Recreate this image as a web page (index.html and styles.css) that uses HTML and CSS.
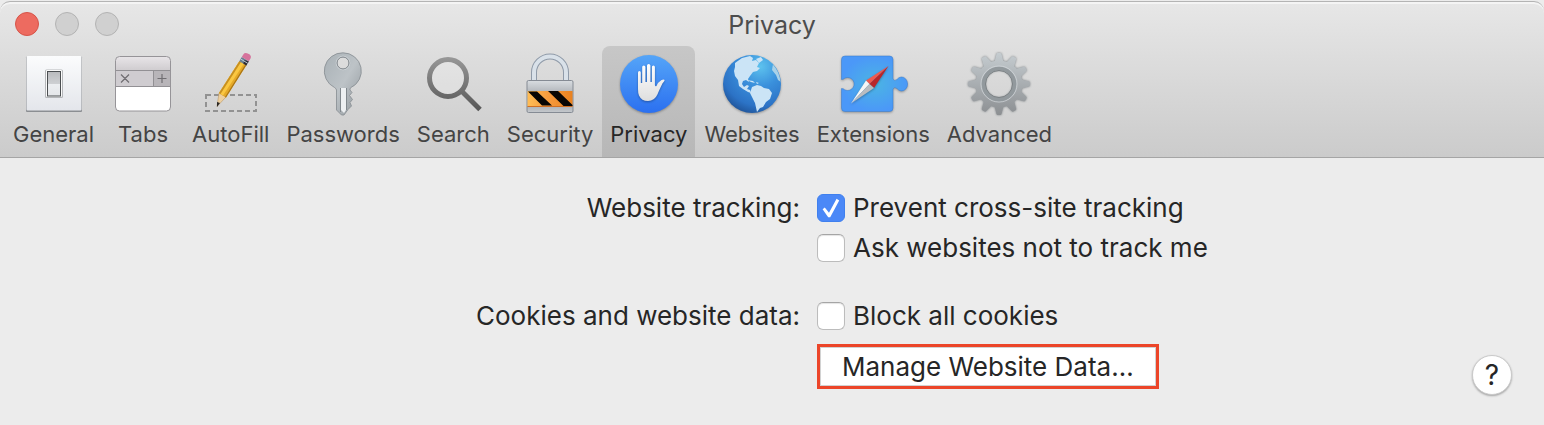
FILE: index.html
```html
<!DOCTYPE html>
<html lang="en">
<head>
    <meta charset="UTF-8">
    <title>Privacy</title>
    <link rel="stylesheet" href="styles.css">
</head>
<body>
<div class="window">
    <header class="header">
        <div class="titlebar">
            <div class="lights">
                <button class="light close" aria-label="Close"></button>
                <button class="light" aria-label="Minimize"></button>
                <button class="light" aria-label="Zoom"></button>
            </div>
            <h1 class="title">Privacy</h1>
        </div>

        <nav class="toolbar">
            <button class="tab">
                <svg class="icon" viewBox="0 0 64 64">
                    <defs>
                        <linearGradient id="plate" x2="0" y2="1"><stop stop-color="#fbfcfd"/><stop offset="1" stop-color="#e4e6eb"/></linearGradient>
                        <linearGradient id="rocker" x2="0" y2="1"><stop stop-color="#b9babd"/><stop offset=".5" stop-color="#ced0d3"/><stop offset=".52" stop-color="#eceef1"/><stop offset="1" stop-color="#e4e6e9"/></linearGradient>
                    </defs>
                    <rect x="4" y="4.500" width="56" height="55.500" rx="1" fill="#8b8e92"/>
                    <rect x="4.500" y="4" width="55" height="54.500" rx="1" fill="url(#plate)"/>
                    <rect x="23" y="17.500" width="18" height="28.500" rx="1.500" fill="#b5b7ba"/>
                    <rect x="24" y="18" width="16" height="27" rx="1" fill="#fafafa"/>
                    <rect x="25.500" y="19.500" width="13" height="24.500" fill="url(#rocker)" stroke="#4b4e51"/>
                </svg>
                <span>General</span>
            </button>

            <button class="tab">
                <svg class="icon" viewBox="0 0 64 64">
                    <defs>
                        <linearGradient id="bar" x2="0" y2="1"><stop stop-color="#e8e5e8"/><stop offset="1" stop-color="#cfcccf"/></linearGradient>
                    </defs>
                    <rect x="4.500" y="4.500" width="55" height="54.500" rx="4" fill="#fff"/>
                    <path d="M4.500 18.500v-10a4 4 0 0 1 4-4h47a4 4 0 0 1 4 4v10z" fill="url(#bar)"/>
                    <path d="M4.500 18.500h38v16h-38z" fill="#cfccd0"/>
                    <path d="M42.500 18.500h17v16h-17z" fill="#b8b5b9"/>
                    <path d="M4.500 18.500h55M4.500 34.500h55M42.500 18.500v16" stroke="#929094" fill="none"/>
                    <rect x="4.500" y="4.500" width="55" height="54.500" rx="4" fill="none" stroke="#969498"/>
                    <path d="M10 22.500l8 8m0-8l-8 8M46.500 26.500h9M51 22v9" stroke="#706e72" stroke-width="1.200" fill="none"/>
                </svg>
                <span>Tabs</span>
            </button>

            <button class="tab">
                <svg class="icon" viewBox="0 0 64 64">
                    <rect x="7" y="43" width="50" height="16" fill="none" stroke="#929292" stroke-width="2" stroke-dasharray="5 3"/>
                    <path d="M20 41l7 4-9 9.500z" fill="#edcf9f" stroke="#b08c58" stroke-width=".5"/>
                    <path d="M18 50l3 1-3 4z" fill="#292725"/>
                    <path d="M20 41L40.500 9l7 4L27 45.500z" fill="#e5a928"/>
                    <path d="M20 41L40.500 9l4.500 2.500L24 43.500z" fill="#fac741"/>
                    <path d="M20 41L40.500 9l1.500 1L21.500 42z" fill="#c68f22"/>
                    <path d="M27 45.500L47.500 13l-1.200-.6L26 45z" fill="#a97517"/>
                    <path d="M40.300 9.200l2.500-4.200 7 4.300-2.500 4.200z" fill="#6a7f91"/>
                    <path d="M45.500 8l4.300 1.500-2.500 4-3-2z" fill="#302b31"/>
                    <path d="M41.700 7l7 4.300" stroke="#b8ccd9" stroke-width="1"/>
                    <path d="M42.800 5l1.500-2.500Q45.500.5 48 1.200 51 2 51.800 4q.4 1.200-.4 2.700l-1.600 2.600z" fill="#d6739c"/>
                </svg>
                <span>AutoFill</span>
            </button>

            <button class="tab">
                <svg class="icon" viewBox="0 0 64 64">
                    <defs>
                        <linearGradient id="key" x2="1" y2="1"><stop stop-color="#a9b1b6"/><stop offset=".5" stop-color="#bdc3c7"/><stop offset="1" stop-color="#8e959a"/></linearGradient>
                    </defs>
                    <path fill-rule="evenodd" d="M32 .8a18.300 18.300 0 0 1 7.500 35l-.5 1.200v1l2 2.500-2.500 3 3 4-2.500 3 1.500 3.500-3.500 3.500-4 5.500h-2.500L25.500 58V38q-.3-1.500-2-2.500A18.300 18.300 0 0 1 32 .8zm0 4.200a6 6 0 1 0 0 12 6 6 0 0 0 0-12z" fill="url(#key)" stroke="#858c90" stroke-width=".8"/>
                    <path d="M30 36h5v22l-2 3-3-3z" fill="#edf0f2"/>
                    <path d="M29.500 36v24M35.500 36v22" stroke="#81888d" fill="none"/>
                    <circle cx="32" cy="11" r="6.800" fill="none" stroke="#d7dcdf" stroke-width=".8"/>
                    <circle cx="32" cy="11" r="6" fill="none" stroke="#858c90" stroke-width=".8"/>
                </svg>
                <span>Passwords</span>
            </button>

            <button class="tab">
                <svg class="icon" viewBox="0 0 64 64">
                    <defs>
                        <linearGradient id="lens" gradientUnits="userSpaceOnUse" x1="0" y1="5" x2="0" y2="60"><stop stop-color="#989898"/><stop offset="1" stop-color="#555"/></linearGradient>
                    </defs>
                    <circle cx="27" cy="26" r="18.500" fill="#fff" fill-opacity=".2" stroke="url(#lens)" stroke-width="5"/>
                    <path d="M40 38.500l19 19" stroke="url(#lens)" stroke-width="5"/>
                </svg>
                <span>Search</span>
            </button>

            <button class="tab">
                <svg class="icon" viewBox="0 0 64 64">
                    <defs>
                        <linearGradient id="steel" x2="0" y2="1"><stop stop-color="#d9dde1"/><stop offset=".35" stop-color="#b4b8bd"/><stop offset=".75" stop-color="#a9adb2"/><stop offset="1" stop-color="#c5c9cd"/></linearGradient>
                        <linearGradient id="amber"><stop stop-color="#ffbd56"/><stop offset=".5" stop-color="#f6993b"/><stop offset="1" stop-color="#e98220"/></linearGradient>
                    </defs>
                    <path d="M16 29V20.500a16 16 0 0 1 32 0V29" fill="none" stroke="#8f9aa8" stroke-width="6"/>
                    <path d="M16 29V20.500a16 16 0 0 1 32 0V29" fill="none" stroke="#d9e1e9" stroke-width="4"/>
                    <rect x="9" y="28.500" width="46" height="32" rx="1.500" fill="url(#steel)" stroke="#858b94"/>
                    <path d="M9.500 39h45v15h-45z" fill="url(#amber)"/>
                    <path d="M10 39.500h9l15 14H24zM30 39h10l14.500 14v1h-9z" fill="#080604"/>
                    <path d="M9.500 54.500h45" stroke="#d06f23"/>
                </svg>
                <span>Security</span>
            </button>

            <button class="tab active" aria-current="page">
                <svg class="icon" viewBox="0 0 64 64">
                    <defs>
                        <linearGradient id="blue" x2="0" y2="1"><stop stop-color="#55a5f8"/><stop offset="1" stop-color="#2b70f0"/></linearGradient>
                        <linearGradient id="palm" x2="0" y2="1"><stop stop-color="#fff"/><stop offset="1" stop-color="#dedede"/></linearGradient>
                    </defs>
                    <circle cx="32" cy="32" r="29" fill="url(#blue)" class="shade"/>
                    <path class="shade" fill="url(#palm)" d="M21 37V20.500q0-1.500 1.400-1.500t1.400 1.500V31h1.400V15q0-1.500 1.600-1.500t1.600 1.500v15H30V13.500q0-1.500 1.700-1.500t1.700 1.500V30h1.500V15q0-1.500 1.500-1.500t1.500 1.500v18q.2 2 1.600 1 1.600-4 5-6 2.300-1 3.200 0-.6 1.600-2.300 3.500-3.400 7-5 11Q37.500 49 31 49q-6.500 0-9-5.500-1-2.500-1-6.500z"/>
                </svg>
                <span>Privacy</span>
            </button>

            <button class="tab">
                <svg class="icon" viewBox="0 0 64 64">
                    <defs>
                        <radialGradient id="sea" cx=".65" cy=".2" r=".85"><stop stop-color="#5dc2ee"/><stop offset=".4" stop-color="#3a90dc"/><stop offset=".8" stop-color="#2c73c6"/><stop offset="1" stop-color="#1f5499"/></radialGradient>
                        <clipPath id="globe"><circle cx="32" cy="32" r="28.500"/></clipPath>
                    </defs>
                    <circle cx="32" cy="32" r="29" fill="url(#sea)" class="shade"/>
                    <g clip-path="url(#globe)" fill="#cbe4f6">
                        <path d="M15 11l7-5 8-2 3 2-1 3 4-1 3 3-2 4 3 1-3 3-4 1-3 4-2 3 1 3-3-2-3 1-1 3 2 3 3-2 2 1-2 3 3 1 1 3-3-1-5-3-4-3-1-6-3-4-1-5 1-4z"/>
                        <path d="M36 7l5-2 2 3-4 3zM27 28l6 1 2 2-4-1zM36 30l3 1-2 1zM32 35l5-2 4 1 3 2 5 1 3 4-2 6-4 3-3 5-3 1-3 4-2-9-3-6-2-4z"/>
                        <path d="M53 12l5 6 3 7v5l-3-2-2-5-4-5z" fill="#a9d2e8"/>
                        <path d="M47 5l5 4 2 4-5-4z" fill="#8bcbec"/>
                    </g>
                </svg>
                <span>Websites</span>
            </button>

            <button class="tab">
                <svg class="icon" viewBox="0 0 64 64">
                    <defs>
                        <radialGradient id="puzzle"><stop stop-color="#4bb5e3"/><stop offset="1" stop-color="#4b98f8"/></radialGradient>
                    </defs>
                    <path class="shade" fill="url(#puzzle)" stroke="#3478cb" stroke-width=".5" d="M4 4h44.500q3.500 0 3.500 3.500V27q1.500 2.500 4 .500A6 7 0 1 1 56 36.500q-2.500-2-4 .500v19q0 3.500-3.500 3.500H4Q.5 59.500.5 56V36.500q2 0 3 1.200A6.500 6.500 0 1 0 3.500 26.300q-1 1.200-3 1.200v-20Q.5 4 4 4z"/>
                    <g class="shade">
                        <path d="M47.500 14L25 28.500l3.500 3.500z" fill="#ef5a50"/>
                        <path d="M47.500 14L33 36l-4.500-4z" fill="#b9262a"/>
                        <path d="M10 51.500L25 28.500l3.500 3.500z" fill="#f6f6f6"/>
                        <path d="M10 51.500L33 36l-4.500-4z" fill="#b9bcc0"/>
                    </g>
                </svg>
                <span>Extensions</span>
            </button>

            <button class="tab">
                <svg class="icon" viewBox="0 0 64 64">
                    <defs>
                        <linearGradient id="metal" x2="0" y2="1"><stop stop-color="#c6cdd1"/><stop offset="1" stop-color="#8b8e91"/></linearGradient>
                        <path id="teeth" d="M27.500 10l2-8q.2-1 1.200-1h2.600q1 0 1.200 1l2 8zM27.500 54l2 8q.2 1 1.200 1h2.600q1 0 1.200-1l2-8z"/>
                        <mask id="gear">
                            <g fill="#fff">
                                <circle cx="32" cy="32" r="23.500"/>
                                <use href="#teeth"/>
                                <use href="#teeth" transform="rotate(30 32 32)"/>
                                <use href="#teeth" transform="rotate(60 32 32)"/>
                                <use href="#teeth" transform="rotate(90 32 32)"/>
                                <use href="#teeth" transform="rotate(120 32 32)"/>
                                <use href="#teeth" transform="rotate(150 32 32)"/>
                            </g>
                            <circle cx="32" cy="32" r="13.500" fill="#000"/>
                        </mask>
                    </defs>
                    <g class="edge"><rect width="64" height="64" fill="url(#metal)" mask="url(#gear)"/></g>
                    <circle cx="32" cy="32" r="18" fill="none" stroke="#d2d7da" stroke-width=".8"/>
                    <circle cx="32" cy="32" r="15.500" fill="none" stroke="#92999d" stroke-width="3.500"/>
                    <circle cx="32" cy="32" r="13.500" fill="none" stroke="#7b8184"/>
                </svg>
                <span>Advanced</span>
            </button>
        </nav>
    </header>

    <main class="pane">
        <div class="name" id="tracking">Website tracking:</div>
        <div class="options" role="group" aria-labelledby="tracking">
            <label class="check"><input type="checkbox" checked><span>Prevent cross-site tracking</span></label>
            <label class="check"><input type="checkbox"><span>Ask websites not to track me</span></label>
        </div>

        <div class="name" id="cookies">Cookies and website data:</div>
        <div class="options" role="group" aria-labelledby="cookies">
            <label class="check"><input type="checkbox"><span>Block all cookies</span></label>
            <div class="actions">
                <button class="manage">Manage Website Data…</button>
                <button class="help" aria-label="Help">?</button>
            </div>
        </div>
    </main>
</div>
</body>
</html>
```
FILE: styles.css
```css
* {
    box-sizing: border-box;
}

body {
    margin: 0;
    background: #ececec;
    color: #262626;
    font-family: Inter, "Liberation Sans", sans-serif;
    font-size: 26px;
}

button {
    margin: 0;
    padding: 0;
    border: none;
    background: none;
    color: inherit;
    font: inherit;
}

.window {
    min-height: 100vh;
    padding-top: 1px;
}

/* title bar and toolbar */
.header {
    border: 1px solid #b4b4b4;
    border-width: 1px 0;
    border-bottom-color: #a5a5a5;
    border-radius: 10px 10px 0 0;
    background: linear-gradient(#e7e7e7, #cbcbcb);
    box-shadow: inset 0 2px 0 #f4f4f4;
}

.titlebar {
    display: grid;
    grid-template-columns: 1fr auto 1fr;
    height: 44px;
    padding: 10px 15px 0;
}

.lights {
    display: flex;
    gap: 16px;
}

.light {
    width: 24px;
    height: 24px;
    border: 1px solid #b3b3b3;
    border-radius: 50%;
    background: #d0d0d0;
}

.light.close {
    border-color: #d65449;
    background: #ed6b60;
}

.title {
    margin: 0;
    color: #4d4d4d;
    font-size: 25px;
    font-weight: 400;
    line-height: 26px;
}

.toolbar {
    display: flex;
    gap: 1px;
    padding: 0 5px;
}

.tab {
    display: flex;
    flex-direction: column;
    align-items: center;
    gap: 4px;
    height: 111px;
    padding: 6px 8px 0;
    border-radius: 8px 8px 0 0;
    color: #444;
    font-size: 22px;
    line-height: 28px;
}

.tab.active {
    background: linear-gradient(#c7c7c7, #b7b7b7);
    color: #262626;
}

.icon {
    display: block;
    width: 64px;
    height: 64px;
    overflow: visible;
}

.shade {
    filter: drop-shadow(0 1px 1px rgba(0, 0, 0, 0.3));
}

.edge {
    filter: drop-shadow(0 0 1px #7b8185);
}

/* settings */
.pane {
    display: grid;
    grid-template-columns: 1fr 1fr;
    gap: 28px 17px;
    padding: 30px 32px 30px 105px;
    line-height: 40px;
}

.name {
    text-align: right;
}

.check {
    display: flex;
    align-items: center;
    gap: 8px;
    width: fit-content;
}

.check input {
    appearance: none;
    display: grid;
    place-items: center;
    width: 28px;
    height: 28px;
    margin: 0;
    border: 1px solid #bcbcbc;
    border-top-color: #a5a5a5;
    border-radius: 6px;
    background: #fff;
    box-shadow: inset 0 1px 1px #e4e4e4;
}

.check input:checked {
    border-color: #4080ee;
    background: #4b88f7;
    box-shadow: none;
}

.check input:checked::after {
    content: "";
    width: 20px;
    height: 20px;
    background: #fff;
    clip-path: polygon(8% 56%, 19% 48%, 40% 74%, 78% 4%, 91% 12%, 46% 96%, 36% 96%);
}

.actions {
    display: flex;
    align-items: flex-end;
    justify-content: space-between;
    padding-top: 8px;
}

.manage {
    align-self: flex-start;
    height: 45px;
    padding: 0 22px;
    border: 3px solid #ec4529;
    background: #fff;
    box-shadow: inset 0 0 0 1px #d2d2d2;
    line-height: 38px;
}

.help {
    width: 40px;
    height: 40px;
    margin-top: 11px;
    border: 1px solid #cacaca;
    border-radius: 50%;
    background: #fff;
    box-shadow: 0 1px 2px rgba(0, 0, 0, 0.3);
    font-size: 28px;
    line-height: 38px;
}
```
